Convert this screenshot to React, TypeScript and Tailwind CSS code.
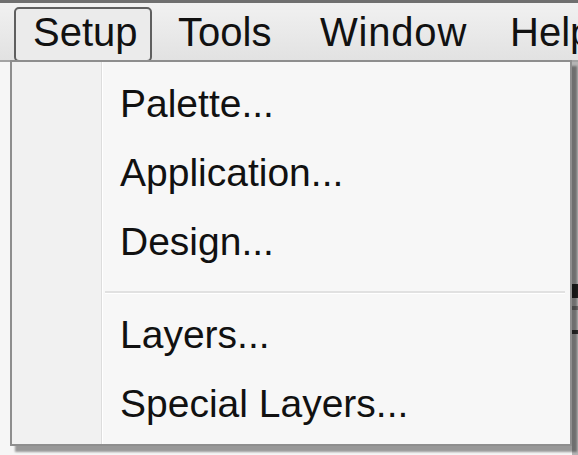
const menuBar = [
  { label: 'Setup', cls: 'w-[138px] pl-[17px] rounded-[5px] border-2 border-[#5f5f5f] bg-[#ebebeb]' },
  { label: 'Tools', cls: 'w-[150px] pl-[26px]' },
  { label: 'Window', cls: 'w-[190px] pl-[18px] tracking-[0.8px]' },
  { label: 'Help', cls: 'pl-[18px]' },
];

const groups = [
  ['Palette...', 'Application...', 'Design...'],
  ['Layers...', 'Special Layers...'],
];

export default function App() {
  return (
    <div
      className="relative w-[578px] h-[455px] overflow-hidden bg-[#f6f6f6] text-[#111]"
      style={{ fontFamily: '"Liberation Sans", Arial, sans-serif' }}
    >
      {/* Menu bar */}
      <div className="h-[62px] border-t-[3px] border-b-2 border-t-[#6f6f6f] border-b-[#a3a3a3] bg-gradient-to-b from-[#f1f1f1] to-[#e2e2e2] flex items-start pl-[14px] pt-[4px] whitespace-nowrap">
        {menuBar.map((m) => (
          <div
            key={m.label}
            className={`h-[55px] shrink-0 flex items-center text-[40px] leading-none pb-[5px] ${m.cls}`}
          >
            {m.label}
          </div>
        ))}
      </div>

      {/* Window behind the menu, right edge */}
      <div className="absolute right-0 top-[62px] bottom-0 w-[6px] bg-[#b4b4b4]">
        <div className="mt-[222px] h-[14px] bg-[#222]" />
        <div className="mt-[8px] h-[4px] bg-[#777]" />
        <div className="mt-[20px] h-[4px] bg-[#333]" />
      </div>

      {/* Dropdown */}
      <div className="absolute left-[10px] top-[60px] w-[562px] h-[386px] border-2 border-[#8e8e8e] bg-[#f7f7f7] flex shadow-[5px_6px_2px_rgba(0,0,0,0.38)]">
        <div className="w-[89px] shrink-0 bg-[#f1f1f1]" />
        <div className="w-[2px] shrink-0 flex">
          <div className="w-px bg-[#dddddd]" />
          <div className="w-px bg-white" />
        </div>
        <div className="flex-1 flex flex-col pt-[7px]">
          {groups.map((items, g) => (
            <div key={g}>
              {g > 0 && (
                <div className="h-[24px] pt-[15px] pl-[2px] pr-[5px]">
                  <div className="h-[2px] bg-[#e1e1e1]" />
                  <div className="h-px bg-white" />
                </div>
              )}
              {items.map((item) => (
                <div key={item} className="h-[69px] leading-[69px] pl-[17px] text-[39px] whitespace-nowrap">
                  {item}
                </div>
              ))}
            </div>
          ))}
        </div>
      </div>
    </div>
  );
}
